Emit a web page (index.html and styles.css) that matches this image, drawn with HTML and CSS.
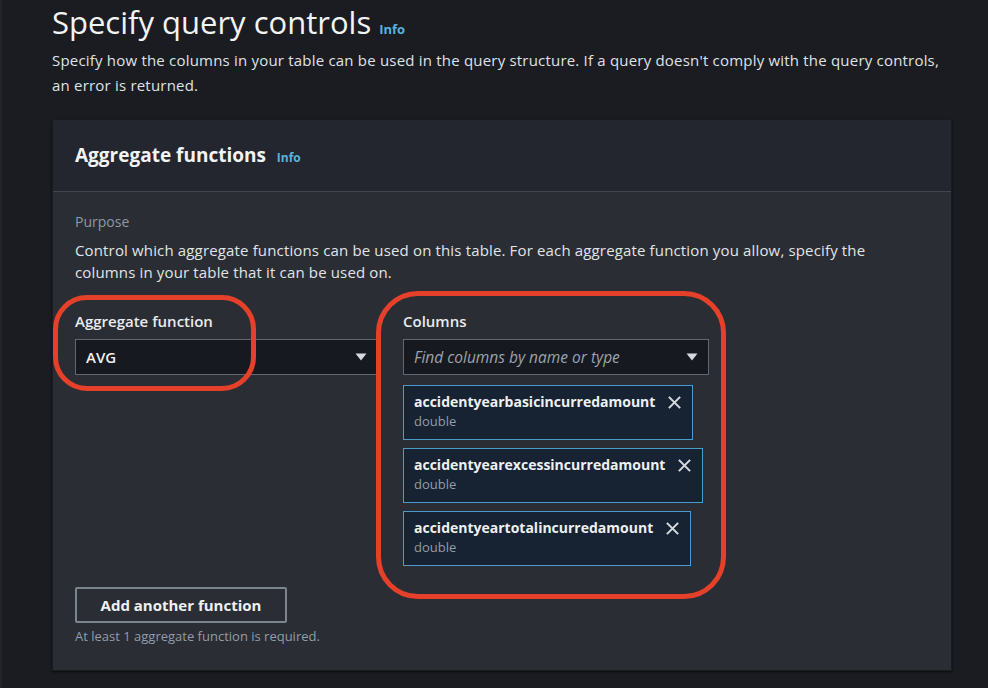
FILE: index.html
```html
<!DOCTYPE html>
<html>
<head>
<meta charset="utf-8">
<link rel="stylesheet" href="styles.css">
</head>
<body>
<div class="page">
  <h1 class="title">Specify query controls <span class="info info-lg">Info</span></h1>
  <p class="desc">Specify how the columns in your table can be used in the query structure. If a query doesn't comply with the query controls, an error is returned.</p>

  <section class="panel">
    <div class="panel-head">
      <h2 class="panel-title">Aggregate functions <span class="info">Info</span></h2>
    </div>
    <div class="panel-body">
      <div class="purpose-label">Purpose</div>
      <div class="purpose-text">Control which aggregate functions can be used on this table. For each aggregate function you allow, specify the columns in your table that it can be used on.</div>

      <div class="fields">
        <div class="field field-left">
          <div class="label">Aggregate function</div>
          <div class="select">
            <span class="select-value">AVG</span>
            <svg class="caret" width="12" height="8" viewBox="0 0 12 8"><path d="M0.5 0.5h11L6 7.5z" fill="#d5d9de"/></svg>
          </div>
          <div class="oval oval-left"></div>
        </div>
        <div class="field field-right">
          <div class="label">Columns</div>
          <div class="select select-cols">
            <span class="placeholder">Find columns by name or type</span>
            <svg class="caret" width="12" height="8" viewBox="0 0 12 8"><path d="M0.5 0.5h11L6 7.5z" fill="#d5d9de"/></svg>
          </div>
          <div class="tokens">
            <div class="token">
              <div class="token-text">
                <div class="token-name">accidentyearbasicincurredamount</div>
                <div class="token-type">double</div>
              </div>
              <svg class="x" width="15" height="15" viewBox="0 0 16 16"><path d="M2 2L14 14M14 2L2 14" stroke="#d5d9de" stroke-width="2.2" fill="none"/></svg>
            </div>
            <div class="token">
              <div class="token-text">
                <div class="token-name">accidentyearexcessincurredamount</div>
                <div class="token-type">double</div>
              </div>
              <svg class="x" width="15" height="15" viewBox="0 0 16 16"><path d="M2 2L14 14M14 2L2 14" stroke="#d5d9de" stroke-width="2.2" fill="none"/></svg>
            </div>
            <div class="token">
              <div class="token-text">
                <div class="token-name">accidentyeartotalincurredamount</div>
                <div class="token-type">double</div>
              </div>
              <svg class="x" width="15" height="15" viewBox="0 0 16 16"><path d="M2 2L14 14M14 2L2 14" stroke="#d5d9de" stroke-width="2.2" fill="none"/></svg>
            </div>
          </div>
          <div class="oval oval-right"></div>
        </div>
      </div>

      <button class="btn">Add another function</button>
      <div class="hint">At least 1 aggregate function is required.</div>
    </div>
  </section>
</div>
</body>
</html>
```

FILE: styles.css
```css
* { box-sizing: border-box; }
html, body {
  margin: 0;
  padding: 0;
  background: #1b1c21;
  font-family: "Open Sans", "Noto Sans", sans-serif;
  color: #e4e6ea;
}
body {
  border-left: 2px solid #222329;
  min-height: 688px;
}
.page {
  padding: 4px 0 0 50px;
  width: 950px;
}
.title {
  margin: 0;
  font-size: 31px;
  line-height: 36px;
  font-weight: 400;
  color: #f2f3f5;
}
.info {
  font-size: 12px;
  font-weight: 700;
  color: #56b4dc;
  vertical-align: middle;
  margin-left: 4px;
  letter-spacing: 0;
}
.info-lg {
  font-size: 13px;
  position: relative;
  top: 3px;
  margin-left: 0;
}
.desc {
  margin: 4px 0 0;
  font-size: 15px;
  line-height: 25px;
  letter-spacing: 0.2px;
  color: #dfe2e6;
  font-weight: 500;
}
.panel {
  margin-top: 21px;
  background: #2a2d33;
  border: 1px solid #1a1b1f;
  box-shadow: 0 1px 2px rgba(0,0,0,0.6);
}
.panel-head {
  height: 72px;
  background: #23262e;
  border-bottom: 1px solid #41454e;
  display: flex;
  align-items: center;
  padding: 0 22px;
}
.panel-title {
  margin: 0;
  font-size: 19px;
  font-weight: 700;
  color: #f2f3f5;
}
.panel-title .info { margin-left: 6px; }
.panel-body {
  padding: 20px 22px 26px;
}
.purpose-label {
  font-size: 14px;
  line-height: 20px;
  color: #8f98a4;
}
.purpose-text {
  margin-top: 7px;
  font-size: 15px;
  line-height: 22px;
  letter-spacing: 0.15px;
  color: #e1e4e8;
  padding-right: 20px;
}
.fields {
  display: flex;
  gap: 25px;
  margin-top: 28px;
}
.field { position: relative; }
.field-left { width: 303px; }
.field-right { width: 306px; }
.label {
  font-size: 15px;
  line-height: 20px;
  font-weight: 600;
  color: #e9ebee;
}
.select {
  margin-top: 8px;
  height: 36px;
  background: #16191f;
  border: 1px solid #606873;
  display: flex;
  align-items: center;
  justify-content: space-between;
  padding: 0 10px 0 10px;
}
.select-value {
  font-size: 15px;
  font-weight: 600;
  color: #eef0f2;
}
.placeholder {
  font-size: 15.5px;
  font-style: italic;
  color: #9aa3ae;
}
.caret { flex: none; }
.tokens {
  margin-top: 10px;
  display: flex;
  flex-direction: column;
  align-items: flex-start;
  gap: 8px;
}
.token {
  display: flex;
  align-items: flex-start;
  gap: 12px;
  height: 55px;
  background: #172233;
  border: 1px solid #4b9bcb;
  padding: 6px 10px 0 10px;
}
.token-name {
  font-size: 14px;
  line-height: 20px;
  font-weight: 700;
  color: #eef0f2;
}
.token-type {
  font-size: 13px;
  line-height: 17px;
  color: #939ca7;
  margin-top: 1px;
}
.x { margin-top: 3px; flex: none; }
.btn {
  display: block;
  margin-top: 21px;
  width: 212px;
  height: 36px;
  background: transparent;
  border: 2px solid #7c848e;
  border-radius: 2px;
  font-family: inherit;
  font-size: 15px;
  font-weight: 700;
  color: #eef0f2;
}
.hint {
  margin-top: 5px;
  font-size: 13px;
  line-height: 16px;
  color: #939ca7;
}
.oval {
  position: absolute;
  border: 5px solid #e5402a;
  pointer-events: none;
}
.oval-left {
  left: -22px;
  top: -16px;
  width: 203px;
  height: 96px;
  border-radius: 34px;
}
.oval-right {
  left: -27px;
  top: -20px;
  width: 350px;
  height: 308px;
  border-radius: 42px;
}
```
